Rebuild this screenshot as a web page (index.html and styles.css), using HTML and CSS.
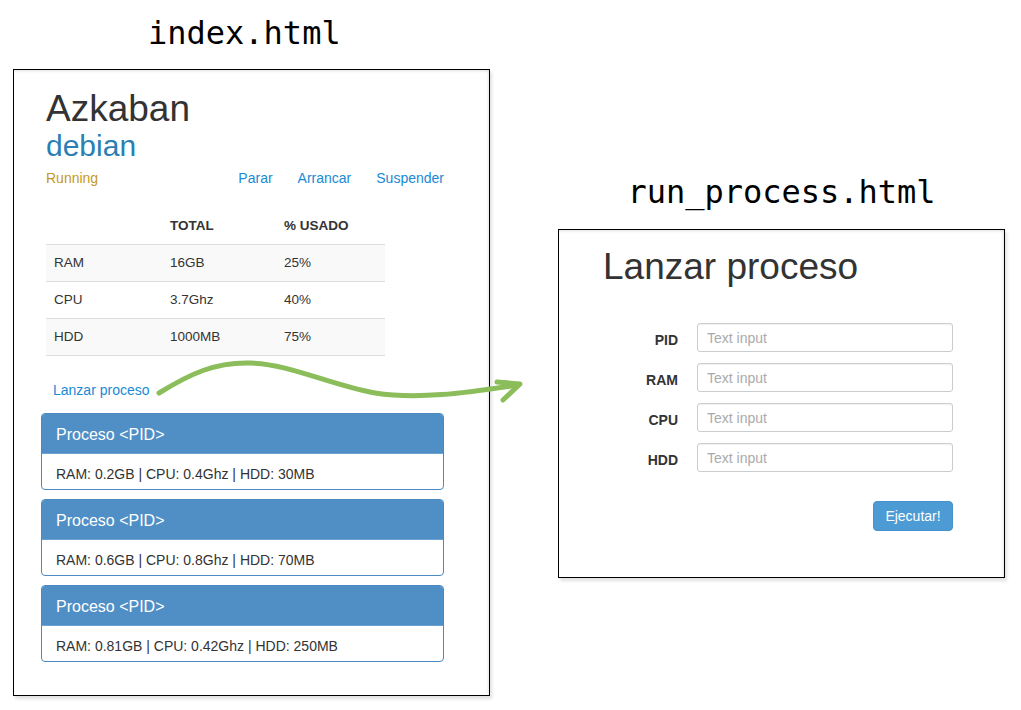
FILE: index.html
```html
<!DOCTYPE html>
<html lang="es">
<head>
<meta charset="utf-8">
<title>Azkaban</title>
<link rel="stylesheet" href="styles.css">
</head>
<body>
<div class="page">
  <section class="col col-left">
    <h1 class="file-title file-title-left">index.html</h1>
    <div class="panel panel-left">
      <h2 class="host">Azkaban</h2>
      <h3 class="os">debian</h3>
      <div class="status-row">
        <span class="status">Running</span>
        <nav class="actions">
          <a href="#">Parar</a>
          <a href="#">Arrancar</a>
          <a href="#">Suspender</a>
        </nav>
      </div>
      <table class="res">
        <thead>
          <tr><th class="c1"></th><th class="c2">TOTAL</th><th class="c3">% USADO</th></tr>
        </thead>
        <tbody>
          <tr class="odd"><td>RAM</td><td>16GB</td><td>25%</td></tr>
          <tr><td>CPU</td><td>3.7Ghz</td><td>40%</td></tr>
          <tr class="odd"><td>HDD</td><td>1000MB</td><td>75%</td></tr>
        </tbody>
      </table>
      <a class="launch" href="#">Lanzar proceso</a>
      <div class="cards">
        <div class="card">
          <div class="card-head">Proceso &lt;PID&gt;</div>
          <div class="card-body">RAM: 0.2GB | CPU: 0.4Ghz | HDD: 30MB</div>
        </div>
        <div class="card">
          <div class="card-head">Proceso &lt;PID&gt;</div>
          <div class="card-body">RAM: 0.6GB | CPU: 0.8Ghz | HDD: 70MB</div>
        </div>
        <div class="card">
          <div class="card-head">Proceso &lt;PID&gt;</div>
          <div class="card-body">RAM: 0.81GB | CPU: 0.42Ghz | HDD: 250MB</div>
        </div>
      </div>
    </div>
  </section>
  <section class="col col-right">
    <h1 class="file-title file-title-right">run_process.html</h1>
    <div class="panel panel-right">
      <h2 class="form-title">Lanzar proceso</h2>
      <form class="form">
        <div class="row"><label>PID</label><input type="text" placeholder="Text input"></div>
        <div class="row"><label>RAM</label><input type="text" placeholder="Text input"></div>
        <div class="row"><label>CPU</label><input type="text" placeholder="Text input"></div>
        <div class="row"><label>HDD</label><input type="text" placeholder="Text input"></div>
        <div class="submit-row"><button type="button">Ejecutar!</button></div>
      </form>
    </div>
  </section>
</div>
<svg class="arrow" width="1021" height="710" viewBox="0 0 1021 710">
  <path d="M159,393 C190,374 215,362 250,363 C290,364 330,385 375,393 C420,400 470,392 518,385" fill="none" stroke="#8bbd5a" stroke-width="5" stroke-linecap="round"/>
  <path d="M497,382 L520,384 L503,400" fill="none" stroke="#8bbd5a" stroke-width="5" stroke-linecap="round" stroke-linejoin="round"/>
</svg>
</body>
</html>
```
FILE: styles.css
```css
html, body {
  margin: 0;
  padding: 0;
  background: #fff;
}
body {
  width: 1021px;
  height: 710px;
  overflow: hidden;
  position: relative;
  font-family: "Liberation Sans", Arial, sans-serif;
  color: #333;
}
.page {
  display: flex;
  align-items: flex-start;
}
.col-left {
  margin-left: 13px;
  width: 477px;
}
.col-right {
  margin-left: 68px;
  width: 447px;
}
.file-title {
  margin: 0;
  font-family: "DejaVu Sans Mono", "Liberation Mono", monospace;
  font-weight: normal;
  font-size: 32px;
  line-height: 36px;
  color: #000;
}
.file-title-left {
  padding: 15px 0 0 135px;
  height: 54px;
}
.file-title-right {
  padding-top: 174px;
  height: 55px;
  text-align: center;
}
.panel {
  border: 1px solid #000;
  background: #fff;
  box-shadow: 2px 3px 3px rgba(0, 0, 0, 0.12), inset 0 3px 3px -2px rgba(0, 0, 0, 0.12), inset -3px 0 3px -2px rgba(0, 0, 0, 0.1);
  box-sizing: border-box;
}
.panel-left {
  padding: 19px 45px 33px 32px;
}
.host {
  margin: 0;
  font-size: 37px;
  line-height: 40px;
  font-weight: normal;
  color: #333;
}
.os {
  margin: 0;
  font-size: 30px;
  line-height: 34px;
  font-weight: normal;
  color: #2a80b3;
}
.status-row {
  display: flex;
  justify-content: space-between;
  margin-top: 5px;
  font-size: 14px;
  line-height: 20px;
}
.status {
  color: #c49a1a;
}
.actions {
  display: flex;
  gap: 25px;
}
.actions a, .launch {
  color: #1a8ad4;
  text-decoration: none;
}
.res {
  margin-top: 20px;
  border-collapse: collapse;
  width: 339px;
  font-size: 13.5px;
  line-height: 20px;
}
.res th, .res td {
  padding: 8px;
  text-align: left;
  border-bottom: 1px solid #ddd;
}
.res th {
  font-weight: bold;
}
.res .c1 { width: 100px; }
.res .c2 { width: 98px; }
.res tr.odd td {
  background: #f9f9f9;
}
.launch {
  display: block;
  margin: 24px 0 0 7px;
  font-size: 14px;
  line-height: 20px;
  width: max-content;
}
.cards {
  margin: 13px 0 0 -5px;
  display: flex;
  flex-direction: column;
  gap: 9px;
}
.card {
  border: 1px solid #4a89c2;
  border-radius: 4px;
  overflow: hidden;
}
.card-head {
  background: #508fc6;
  color: #fff;
  font-size: 16px;
  line-height: 19px;
  padding: 11px 14px 9px;
  border-bottom: 1px solid #6aa2d4;
}
.card-body {
  font-size: 14px;
  line-height: 20px;
  padding: 10px 14px 5px;
  color: #333;
}
.panel-right {
  height: 349px;
  padding: 17px 0 0 44px;
}
.form-title {
  margin: 0;
  font-size: 37px;
  line-height: 40px;
  font-weight: normal;
  color: #333;
}
.form {
  margin-top: 36px;
  display: flex;
  flex-direction: column;
  gap: 11px;
  width: 350px;
}
.row {
  display: flex;
  align-items: flex-start;
  gap: 19px;
}
.row label {
  width: 75px;
  text-align: right;
  font-weight: bold;
  font-size: 14px;
  line-height: 20px;
  padding-top: 7px;
  color: #333;
}
.row input {
  width: 256px;
  height: 29px;
  box-sizing: border-box;
  border: 1px solid #ccc;
  border-radius: 3px;
  box-shadow: inset 0 1px 1px rgba(0, 0, 0, 0.06);
  padding: 0 9px;
  font-family: "Liberation Sans", Arial, sans-serif;
  font-size: 14px;
  color: #333;
  outline: none;
}
.row input::placeholder {
  color: #aaa;
}
.submit-row {
  display: flex;
  justify-content: flex-end;
  width: 350px;
  margin-top: 18px;
}
.submit-row button {
  width: 80px;
  height: 30px;
  border: 1px solid #4592cc;
  border-radius: 4px;
  background: #4c9bd5;
  color: #fff;
  font-family: "Liberation Sans", Arial, sans-serif;
  font-size: 14px;
  padding: 0;
}
.arrow {
  position: absolute;
  left: 0;
  top: 0;
  pointer-events: none;
}
```
